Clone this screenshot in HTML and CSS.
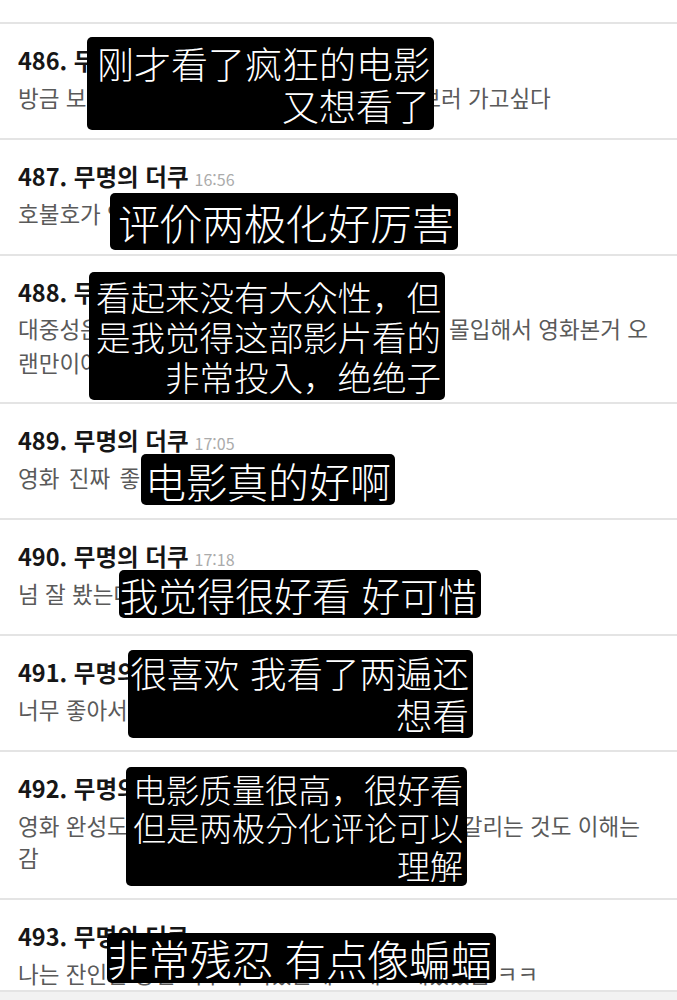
FILE: index.html
```html
<!DOCTYPE html>
<html lang="ko">
<head>
<meta charset="utf-8">
<title>댓글</title>
<link rel="stylesheet" href="styles.css">
</head>
<body>
<div class="list">
  <div class="spacer"></div>

  <div class="row">
    <div class="head"><span class="name">486. 무명의 더쿠</span><span class="time">16:48</span></div>
    <div class="text">방금 보고 왔는데 너무 좋아서 내일 당장 또 보러 가고싶다</div>
    <div class="cap cap-1">刚才看了疯狂的电影<br>又想看了</div>
  </div>

  <div class="row">
    <div class="head"><span class="name">487. 무명의 더쿠</span><span class="time">16:56</span></div>
    <div class="text">호불호가 엄청 갈리네 신기하다</div>
    <div class="cap cap-2">评价两极化好厉害</div>
  </div>

  <div class="row">
    <div class="head"><span class="name">488. 무명의 더쿠</span><span class="time">16:59</span></div>
    <div class="text text-tall">대중성은 없어 보이는데 나는 개인적으로 너무 몰입해서 영화본거 오<br>랜만이어서 좋았다</div>
    <div class="cap cap-3">看起来没有大众性，但<br>是我觉得这部影片看的<br>非常投入，绝绝子</div>
  </div>

  <div class="row">
    <div class="head"><span class="name">489. 무명의 더쿠</span><span class="time">17:05</span></div>
    <div class="text text-wide">영화 진짜 좋았어 또 보고 싶다ㅠㅠ</div>
    <div class="cap cap-4">电影真的好啊</div>
  </div>

  <div class="row">
    <div class="head"><span class="name">490. 무명의 더쿠</span><span class="time">17:18</span></div>
    <div class="text">넘 잘 봤는데 흥행이 안돼서 너무 아쉽다</div>
    <div class="cap cap-5">我觉得很好看 好可惜</div>
  </div>

  <div class="row">
    <div class="head"><span class="name">491. 무명의 더쿠</span><span class="time">17:24</span></div>
    <div class="text">너무 좋아서 두 번 봤는데 또 보고 싶어요</div>
    <div class="cap cap-6">很喜欢 我看了两遍还<br>想看</div>
  </div>

  <div class="row">
    <div class="head"><span class="name">492. 무명의 더쿠</span><span class="time">17:31</span></div>
    <div class="text">영화 완성도 높고 취향 많이 타는 영화라 평가가 갈리는 것도 이해는<br>감</div>
    <div class="cap cap-7">电影质量很高，很好看<br>但是两极分化评论可以<br>理解</div>
  </div>

  <div class="row row-last">
    <div class="head"><span class="name">493. 무명의 더쿠</span><span class="time">17:40</span></div>
    <div class="text">나는 잔인한 장면 너무 무서웠는데 그래도 재밌었음 ㅋㅋ</div>
    <div class="cap cap-8">非常残忍 有点像蝙蝠</div>
  </div>
</div>
<div class="bottom-bar"></div>
</body>
</html>
```
FILE: styles.css
```css
html, body {
  margin: 0;
  padding: 0;
  background: #ffffff;
}

body {
  font-family: "Noto Sans CJK KR", "Noto Sans", sans-serif;
  height: 1000px;
  overflow: hidden;
}

.list {
  display: flex;
  flex-direction: column;
}

.spacer {
  height: 22px;
}

.row {
  position: relative;
  border-top: 2px solid #e4e4e4;
  padding: 21px 18px 25px;
}

.head {
  height: 30px;
  line-height: 30px;
  white-space: nowrap;
}

.name {
  font-size: 23.5px;
  font-weight: 700;
  color: #161616;
}

.time {
  font-size: 16px;
  color: #ababab;
  margin-left: 6px;
}

.text {
  margin-top: 6px;
  font-size: 22.5px;
  line-height: 32px;
  color: #5a5a5a;
  white-space: nowrap;
}

.text-tall {
  line-height: 34px;
  margin-top: 4px;
  margin-bottom: -2px;
}

.text-wide {
  word-spacing: 3px;
}

.cap {
  position: absolute;
  box-sizing: border-box;
  background: #000000;
  color: #ffffff;
  border-radius: 5px;
  font-family: "Noto Sans CJK SC", sans-serif;
  font-weight: 300;
  white-space: nowrap;
  text-align: right;
  display: flex;
  align-items: center;
  justify-content: flex-end;
  padding: 0 4px;
}

.cap-1 { left: 87px;  top: 13px; width: 347px; height: 93px;  font-size: 37px; line-height: 42px; }
.cap-2 { left: 110px; top: 53px; width: 348px; height: 57px;  font-size: 42px; line-height: 50px; }
.cap-3 { left: 89px;  top: 16px; width: 356px; height: 128px; font-size: 34.5px; line-height: 40px; }
.cap-4 { left: 141px; top: 50px; width: 254px; height: 51px;  font-size: 41px; line-height: 48px; }
.cap-5 { left: 119px; top: 50px; width: 362px; height: 48px;  font-size: 38.5px; line-height: 46px; }
.cap-6 { left: 128px; top: 14px; width: 345px; height: 88px;  font-size: 36.5px; line-height: 42px; }
.cap-7 { left: 126px; top: 15px; width: 341px; height: 119px; font-size: 33px; line-height: 38px; }
.cap-8 { left: 107px; top: 33px; width: 389px; height: 50px;  font-size: 41.5px; line-height: 48px; }

.bottom-bar {
  position: fixed;
  left: 0;
  right: 0;
  bottom: 0;
  height: 8px;
  background: #f2f2f2;
  border-top: 2px solid #e4e4e4;
}
```
